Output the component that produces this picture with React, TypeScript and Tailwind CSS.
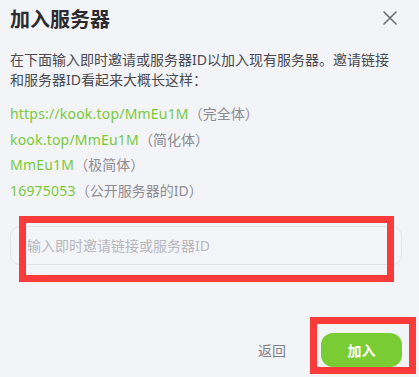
import { X } from "lucide-react";

const examples = [
  { link: "https://kook.top/MmEu1M", note: "（完全体）" },
  { link: "kook.top/MmEu1M", note: "（简化体）" },
  { link: "MmEu1M", note: "（极简体）" },
  { link: "16975053", note: "（公开服务器的ID）" },
];

export default function App() {
  return (
    <div
      className="w-[419px] h-[377px] bg-[#f3f4f8] flex flex-col overflow-hidden"
      style={{ fontFamily: '"Noto Sans", "Noto Sans CJK SC", sans-serif' }}
    >
      {/* Header */}
      <div className="flex items-center justify-between pl-[10px] pr-[17px] pt-[6px]">
        <h1 className="text-[20px] leading-[28px] font-bold text-[#2b2b2f]">加入服务器</h1>
        <button className="text-[#6f6f74] -mt-[4px]">
          <X size={24} strokeWidth={1.6} />
        </button>
      </div>

      {/* Description */}
      <p className="mt-[16px] pl-[10px] pr-[28px] text-[14px] leading-[19.5px] text-[#4a4a50]">
        在下面输入即时邀请或服务器ID以加入现有服务器。邀请链接和服务器ID看起来大概长这样：
      </p>

      {/* Examples */}
      <div className="mt-[12px] px-[10px] flex flex-col text-[14px] leading-[25.6px]">
        {examples.map((e) => (
          <div key={e.link}>
            <span className="text-[#78c93a] tracking-[0.2px]">{e.link}</span>
            <span className="text-[#8c8c91]">{e.note}</span>
          </div>
        ))}
      </div>

      {/* Input */}
      <div className="relative mt-[23px] ml-[10px] mr-[17px]">
        <input
          className="w-full h-[39px] rounded-[10px] border border-[#e3e4ea] bg-[#f4f5f9] pl-[16px] text-[14px] text-[#333] placeholder:text-[#b7b7bc] outline-none"
          placeholder="输入即时邀请链接或服务器ID"
        />
        <div className="absolute left-[9px] top-[-10px] w-[375px] h-[66px] border-[7px] border-[#fb3a3a] pointer-events-none" />
      </div>

      {/* Footer */}
      <div className="mt-auto mb-[10px] flex items-center justify-end gap-[35px] pr-[17px]">
        <button className="text-[14px] text-[#808086]">返回</button>
        <div className="relative">
          <button className="w-[81px] h-[34px] rounded-[12px] bg-[#7acc34] text-white text-[14px] font-bold">
            加入
          </button>
          <div className="absolute left-[-11px] top-[-16px] w-[106px] h-[57px] border-[7px] border-[#fb3a3a] pointer-events-none" />
        </div>
      </div>
    </div>
  );
}
